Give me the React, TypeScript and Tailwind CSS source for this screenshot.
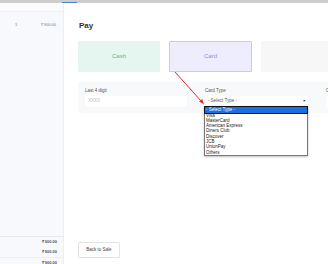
import React from "react";

const cardTypes = ["Visa", "MasterCard", "American Express", "Diners Club", "Discover", "JCB", "UnionPay", "Others"];

const App: React.FC = () => {
  return (
    <div className="relative w-[328px] h-[264px] overflow-hidden bg-white flex flex-col font-['Liberation_Sans',Arial,sans-serif]">
      {/* Top strip */}
      <div className="relative h-[3px] shrink-0 bg-[#cdcdcd]">
        <div className="absolute left-[62px] bottom-0 w-[15px] h-[1px] bg-[#4a7fd4]" />
      </div>

      <div className="flex flex-1 min-h-0">
        {/* Cart sidebar */}
        <aside className="w-[64px] shrink-0 bg-[#f8f9fd] border-r border-[#eceef4] flex flex-col text-[4px] text-[#777]">
          <div className="h-[9px] shrink-0 bg-[#fbfbfd] border-b border-[#eef0f4]" />
          <div className="h-[25px] shrink-0 flex items-center pl-[15px] pr-[7px]">
            <span>1</span>
            <span className="ml-auto">₹ 900.00</span>
          </div>
          <div className="flex-1" />
          <div className="h-[28px] shrink-0 overflow-hidden border-t border-[#e8eaef] text-[#555] font-semibold">
            <div className="h-[10px] flex items-center justify-end pr-[6px]">₹ 900.00</div>
            <div className="h-[10px] flex items-center justify-end pr-[6px]">₹ 900.00</div>
            <div className="h-[10px] flex items-center justify-end pr-[6px] border-t border-[#eceef2]">₹ 900.00</div>
          </div>
        </aside>

        {/* Pay panel */}
        <main className="flex-1 min-w-0 flex flex-col pl-[14px] pt-[18px] pb-[6px]">
          <h1 className="text-[8px] leading-[10px] font-semibold text-[#333] pl-[1px]">Pay</h1>

          <div className="flex gap-[9px] mt-[10px]">
            <div className="w-[82px] h-[31px] shrink-0 rounded-[1px] bg-[#e4f6ef] flex items-center justify-center text-[6px] text-[#5cb990]">
              Cash
            </div>
            <div className="w-[83px] h-[31px] shrink-0 rounded-[1px] bg-[#ededfd] border border-[#c9c9f3] flex items-center justify-center text-[6px] text-[#8b8bee]">
              Card
            </div>
            <div className="w-[82px] h-[31px] shrink-0 rounded-[1px] bg-[#f7f7f7]" />
          </div>

          <div className="mt-[10px] w-[300px] shrink-0 bg-[#f8f9fb] pl-[7px] pt-[6px] pb-[6px] flex gap-[18px] text-[4.5px] text-[#555]">
            <div className="w-[102px] shrink-0">
              <div className="leading-[6px]">Last 4 digit</div>
              <div className="mt-[2px] h-[11px] bg-white flex items-center pl-[3px] text-[#bbb]">XXXX</div>
            </div>
            <div className="w-[103px] shrink-0 relative">
              <div className="leading-[6px]">Card Type</div>
              <div className="mt-[2px] h-[11px] bg-white flex items-center pl-[3px] pr-[2px] text-[#555]">
                <span>- Select Type -</span>
                <span className="ml-auto text-[3.5px] text-[#444]">▼</span>
              </div>
              {/* Open native select list */}
              <div className="absolute left-[-1px] top-[18px] w-[104px] bg-white border border-[#777] shadow-[0_1px_2px_rgba(0,0,0,0.25)] text-[4.5px] text-[#222] z-10">
                <div className="h-[5.5px] leading-[5.5px] bg-[#1b6fe0] text-white pl-[1px] outline outline-[0.5px] outline-[#111]">- Select Type -</div>
                {cardTypes.map((t) => (
                  <div key={t} className="h-[5.3px] leading-[5.3px] pl-[1px]">{t}</div>
                ))}
              </div>
            </div>
            <div className="w-[60px] shrink-0">
              <div className="leading-[6px]">C</div>
              <div className="mt-[2px] h-[11px] bg-white" />
            </div>
          </div>

          <div className="flex-1" />

          <button className="w-[42px] h-[16px] border border-[#e3e3e3] rounded-[1px] bg-white text-[4.5px] text-[#444] flex items-center justify-center">
            Back to Sale
          </button>
        </main>
      </div>

      {/* Red annotation arrow */}
      <svg className="absolute inset-0 pointer-events-none" width="328" height="264" viewBox="0 0 328 264">
        <line x1="175" y1="72" x2="202" y2="102" stroke="#e52b2b" strokeWidth="1" />
        <polygon points="204,104.5 199.2,101.6 202.2,99" fill="#e52b2b" />
      </svg>
    </div>
  );
};

export default App;
